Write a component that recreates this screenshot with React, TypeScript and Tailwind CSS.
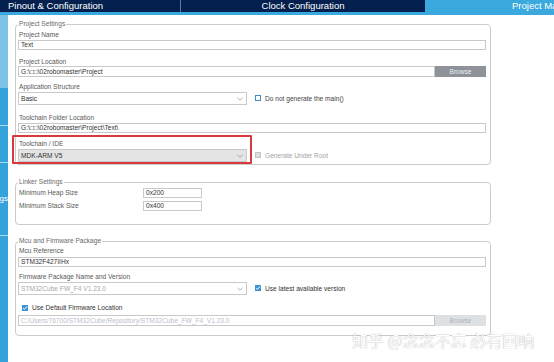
import React from "react";

const Chevron = () => (
  <svg width="6" height="4" viewBox="0 0 6 4" className="shrink-0">
    <polyline points="0.5,0.8 3,3.2 5.5,0.8" fill="none" stroke="#8a8a8a" strokeWidth="0.7" />
  </svg>
);

const Check = () => (
  <svg width="6" height="6" viewBox="0 0 6 6">
    <polyline points="1.1,3 2.5,4.4 5,1.4" fill="none" stroke="#ffffff" strokeWidth="1" />
  </svg>
);

const Label = ({ children, className = "" }: { children: React.ReactNode; className?: string }) => (
  <div className={`h-[8px] leading-[8px] text-[6.6px] text-[#595959] pl-[1px] whitespace-nowrap ${className}`}>{children}</div>
);

const Input = ({ children, className = "", textClass = "text-[#333]" }: { children?: React.ReactNode; className?: string; textClass?: string }) => (
  <div className={`border border-[#c9c9c9] bg-white flex items-center pl-[2px] text-[6.6px] whitespace-nowrap overflow-hidden ${textClass} ${className}`}>
    {children}
  </div>
);

const Select = ({ children, className = "", textClass = "text-[#333]" }: { children?: React.ReactNode; className?: string; textClass?: string }) => (
  <div className={`w-[229px] h-[13px] border border-[#c9c9c9] flex items-center justify-between pl-[2px] pr-[3px] text-[6.6px] ${textClass} ${className}`}>
    <span className="whitespace-nowrap">{children}</span>
    <Chevron />
  </div>
);

export default function App() {
  return (
    <div className="w-[554px] h-[362px] bg-white overflow-hidden relative font-['Liberation_Sans',Arial,sans-serif]">
      {/* Tab bar */}
      <div className="flex h-[12px] bg-[#04204e] text-white text-[9.5px] leading-[12px]">
        <div className="w-[181px] pl-[8px] border-r border-[#5d7aa2] whitespace-nowrap">Pinout &amp; Configuration</div>
        <div className="w-[244px] text-center whitespace-nowrap">Clock Configuration</div>
        <div className="flex-1 bg-[#3ba9de] pl-[87px] whitespace-nowrap overflow-hidden">Project Manager</div>
      </div>
      <div className="h-[3px] bg-[#3ba9de]" />

      <div className="flex h-[347px]">
        {/* Sidebar */}
        <div className="w-[8px] flex flex-col bg-[#33a3da]">
          <div className="h-[73px] bg-[#7dc3e8]" />
          <div className="h-[37px]" />
          <div className="h-[1px] bg-[#a9d9f1]" />
          <div className="h-[36px]" />
          <div className="h-[1px] bg-[#a9d9f1]" />
          <div className="h-[72px] flex items-center justify-end overflow-hidden whitespace-nowrap text-white text-[8px] leading-[8px]">
            <span className="shrink-0">Advanced Settings</span>
          </div>
          <div className="h-[1px] bg-[#a9d9f1]" />
          <div className="flex-1" />
        </div>

        {/* Main */}
        <div className="pl-[7px] pt-[5px] flex flex-col">
          {/* Project Settings */}
          <fieldset className="w-[476px] border border-[#cbcbcb] rounded-[4px] pl-[2px] pr-[4px] pb-[2px] flex flex-col">
            <legend className="px-[1px] text-[6.6px] leading-[8px] text-[#6a6a6a]">Project Settings</legend>
            <Label className="mt-[3px]">Project Name</Label>
            <Input className="mt-[1px] h-[10px]">Text</Input>
            <Label className="mt-[8px]">Project Location</Label>
            <div className="flex h-[11px]">
              <Input className="flex-1 h-[11px]">G:\□□\02robomaster\Project</Input>
              <div className="w-[51px] h-[11px] bg-[#8d9398] text-[#eceef0] text-[6.6px] flex items-center justify-center">Browse</div>
            </div>
            <Label className="mt-[6px]">Application Structure</Label>
            <div className="flex items-center mt-[1px] gap-[8px]">
              <Select className="bg-white">Basic</Select>
              <div className="flex items-center gap-[4px]">
                <div className="w-[6px] h-[6px] border border-[#3b8fd0] bg-white" />
                <span className="text-[6.6px] text-[#444] whitespace-nowrap">Do not generate the main()</span>
              </div>
            </div>
            <Label className="mt-[9px]">Toolchain Folder Location</Label>
            <Input className="mt-[1px] h-[10px]">G:\□□\02robomaster\Project\Text\</Input>
            <div className="relative mt-[7px]">
              <Label>Toolchain / IDE</Label>
              <div className="flex items-center mt-[1px] gap-[8px]">
                <Select className="bg-[#e4e4e4]">MDK-ARM V5</Select>
                <div className="flex items-center gap-[4px]">
                  <div className="w-[6px] h-[6px] border border-[#c4c4c4] bg-[#dcdcdc]" />
                  <span className="text-[6.6px] text-[#a3a3a3] whitespace-nowrap">Generate Under Root</span>
                </div>
              </div>
              <div className="absolute left-[-6px] top-[-5px] w-[240px] h-[29px] border-2 border-[#d7393e] rounded-[1px]" />
            </div>
          </fieldset>

          {/* Linker Settings */}
          <fieldset className="mt-[13px] w-[476px] border border-[#cbcbcb] rounded-[4px] pl-[2px] pr-[4px] pb-[13px] flex flex-col">
            <legend className="px-[1px] text-[6.6px] leading-[8px] text-[#6a6a6a]">Linker Settings</legend>
            <div className="flex items-center mt-[2px] h-[10px]">
              <Label className="w-[125px]">Minimum Heap Size</Label>
              <Input className="w-[59px] h-[10px]">0x200</Input>
            </div>
            <div className="flex items-center mt-[3px] h-[10px]">
              <Label className="w-[125px]">Minimum Stack Size</Label>
              <Input className="w-[59px] h-[10px]">0x400</Input>
            </div>
          </fieldset>

          {/* Mcu and Firmware Package */}
          <fieldset className="mt-[12px] w-[476px] border border-[#cbcbcb] rounded-[4px] pl-[2px] pr-[4px] pb-[9px] flex flex-col">
            <legend className="px-[1px] text-[6.6px] leading-[8px] text-[#6a6a6a]">Mcu and Firmware Package</legend>
            <Label className="mt-[2px]">Mcu Reference</Label>
            <Input className="mt-[2px] h-[10px]">STM32F427IIHx</Input>
            <Label className="mt-[6px]">Firmware Package Name and Version</Label>
            <div className="flex items-center mt-[1px] gap-[8px]">
              <Select className="bg-white" textClass="text-[#a8a8a8]">STM32Cube FW_F4 V1.23.0</Select>
              <div className="flex items-center gap-[4px]">
                <div className="w-[6px] h-[6px] bg-[#3b93d6] flex items-center justify-center"><Check /></div>
                <span className="text-[6.6px] text-[#333] whitespace-nowrap">Use latest available version</span>
              </div>
            </div>
            <div className="flex items-center mt-[9px] h-[8px] pl-[4px] gap-[4px]">
              <div className="w-[6px] h-[6px] bg-[#3b93d6] flex items-center justify-center"><Check /></div>
              <span className="text-[6.6px] text-[#333] whitespace-nowrap">Use Default Firmware Location</span>
            </div>
            <div className="flex h-[11px] mt-[3px]">
              <Input className="flex-1 h-[11px]" textClass="text-[#b9c0cc]">C:/Users/76700/STM32Cube/Repository/STM32Cube_FW_F4_V1.23.0</Input>
              <div className="w-[51px] h-[11px] bg-[#dde1e4] text-[#aeb3b8] text-[6.6px] flex items-center justify-center">Browse</div>
            </div>
          </fieldset>
        </div>
      </div>

      {/* Watermark */}
      <div className="absolute left-[352px] top-[331px] text-[16px] leading-[18px] whitespace-nowrap text-white font-['Noto_Sans_CJK_SC',sans-serif] [text-shadow:0_0_1px_rgba(0,0,0,0.4)]">
        知乎 @念念不忘 必有回响
      </div>
    </div>
  );
}
